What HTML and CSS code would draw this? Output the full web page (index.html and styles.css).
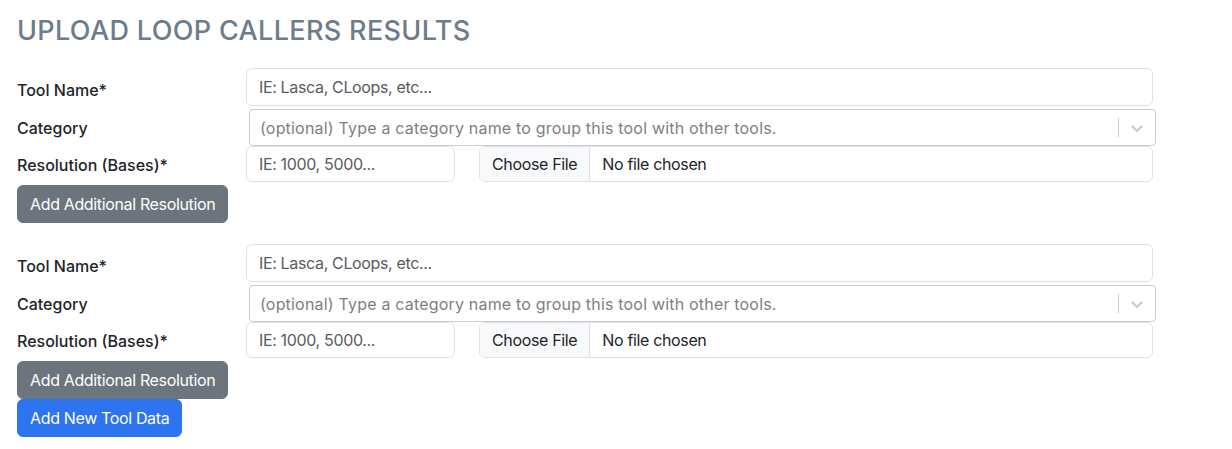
FILE: index.html
```html
<!DOCTYPE html>
<html lang="en">
<head>
<meta charset="utf-8">
<title>Upload Loop Callers Results</title>
<link rel="stylesheet" href="styles.css">
</head>
<body>
<div class="page">
  <h1 class="title">UPLOAD LOOP CALLERS RESULTS</h1>

  <div class="tool-block">
    <div class="row row-name">
      <label class="label">Tool Name*</label>
      <input class="input" type="text" placeholder="IE: Lasca, CLoops, etc...">
    </div>
    <div class="row row-cat">
      <label class="label">Category</label>
      <div class="select">
        <div class="select-value">(optional) Type a category name to group this tool with other tools.</div>
        <div class="select-indicators">
          <span class="select-sep"></span>
          <span class="select-arrow">
            <svg width="20" height="20" viewBox="0 0 20 20"><path fill="#cccccc" d="M4.516 7.548c0.436-0.446 1.043-0.481 1.576 0l3.908 3.747 3.908-3.747c0.533-0.481 1.141-0.446 1.574 0 0.436 0.445 0.408 1.197 0 1.615-0.406 0.418-4.695 4.502-4.695 4.502-0.217 0.223-0.502 0.335-0.787 0.335s-0.57-0.112-0.789-0.335c0 0-4.287-4.084-4.695-4.502s-0.436-1.17 0-1.615z"/></svg>
          </span>
        </div>
      </div>
    </div>
    <div class="row row-res">
      <label class="label">Resolution (Bases)*</label>
      <div class="res-fields">
        <input class="input input-res" type="text" placeholder="IE: 1000, 5000...">
        <div class="file">
          <span class="file-btn">Choose File</span>
          <span class="file-name">No file chosen</span>
        </div>
      </div>
    </div>
    <button class="btn btn-secondary" type="button">Add Additional Resolution</button>
  </div>

  <div class="tool-block tool-block-last">
    <div class="row row-name">
      <label class="label">Tool Name*</label>
      <input class="input" type="text" placeholder="IE: Lasca, CLoops, etc...">
    </div>
    <div class="row row-cat">
      <label class="label">Category</label>
      <div class="select">
        <div class="select-value">(optional) Type a category name to group this tool with other tools.</div>
        <div class="select-indicators">
          <span class="select-sep"></span>
          <span class="select-arrow">
            <svg width="20" height="20" viewBox="0 0 20 20"><path fill="#cccccc" d="M4.516 7.548c0.436-0.446 1.043-0.481 1.576 0l3.908 3.747 3.908-3.747c0.533-0.481 1.141-0.446 1.574 0 0.436 0.445 0.408 1.197 0 1.615-0.406 0.418-4.695 4.502-4.695 4.502-0.217 0.223-0.502 0.335-0.787 0.335s-0.57-0.112-0.789-0.335c0 0-4.287-4.084-4.695-4.502s-0.436-1.17 0-1.615z"/></svg>
          </span>
        </div>
      </div>
    </div>
    <div class="row row-res">
      <label class="label">Resolution (Bases)*</label>
      <div class="res-fields">
        <input class="input input-res" type="text" placeholder="IE: 1000, 5000...">
        <div class="file">
          <span class="file-btn">Choose File</span>
          <span class="file-name">No file chosen</span>
        </div>
      </div>
    </div>
    <button class="btn btn-secondary" type="button">Add Additional Resolution</button>
  </div>

  <button class="btn btn-primary" type="button">Add New Tool Data</button>
</div>
</body>
</html>
```

FILE: styles.css
```css
* { box-sizing: border-box; }

html, body {
  margin: 0;
  padding: 0;
  background: #ffffff;
}

body {
  font-family: Inter, "Noto Sans", sans-serif;
  font-size: 16px;
  line-height: 24px;
  letter-spacing: -0.35px;
  color: #212529;
}

.page {
  padding: 0 17px;
  width: 1180px;
}

.title {
  margin: 0;
  padding-top: 14px;
  height: 68px;
  font-family: Inter, sans-serif;
  font-weight: 500;
  font-size: 27px;
  line-height: 34px;
  letter-spacing: 0.35px;
  color: #6e7b8b;
}

.tool-block {
  display: flex;
  flex-direction: column;
  align-items: flex-start;
  margin-bottom: 21px;
}

.tool-block-last { margin-bottom: 0; }

.row {
  display: grid;
  grid-template-columns: 229px 907px;
  align-items: center;
  width: 100%;
}

.row-name { margin-bottom: 3px; }
.row-res { margin-bottom: 3px; }

.label {
  font-size: 16px;
  color: #212529;
  font-weight: 500;
  letter-spacing: 0;
}

.row-name .label { padding-top: 6px; }
.row-res .label { padding-top: 2px; }

.input {
  display: block;
  width: 100%;
  height: 38px;
  padding: 6px 12px;
  font-family: inherit;
  font-size: 16px;
  line-height: 24px;
  letter-spacing: -0.35px;
  color: #212529;
  background: #fff;
  border: 1px solid #dee2e6;
  border-radius: 6px;
  outline: none;
}

.input::placeholder { color: #595c5f; }

.select {
  margin-left: 3px;
  margin-right: -3px;
  height: 37px;
  display: flex;
  align-items: center;
  border: 1px solid #cccccc;
  border-radius: 4px;
  background: #fff;
}

.select-value {
  flex: 1;
  padding: 2px 8px;
  margin-left: 2px;
  color: #808080;
  letter-spacing: 0.19px;
  white-space: nowrap;
  overflow: hidden;
}

.select-indicators {
  display: flex;
  align-items: center;
  align-self: stretch;
}

.select-sep {
  width: 1px;
  align-self: stretch;
  margin: 8px 0;
  background: #cccccc;
}

.select-arrow {
  display: flex;
  padding: 8px;
}

.res-fields {
  display: grid;
  grid-template-columns: 209px 1fr;
  gap: 24px;
}

.input-res { height: 36px; }

.file {
  display: flex;
  height: 36px;
  border: 1px solid #dee2e6;
  border-radius: 6px;
  overflow: hidden;
  background: #fff;
}

.file-btn {
  display: flex;
  align-items: center;
  padding: 0 12px;
  background: #f8f9fa;
  border-right: 1px solid #dee2e6;
  color: #212529;
}

.file-name {
  display: flex;
  align-items: center;
  padding: 0 12px;
  color: #212529;
}

.btn {
  display: inline-block;
  height: 38px;
  padding: 6px 12px;
  font-family: inherit;
  font-size: 16px;
  line-height: 24px;
  letter-spacing: -0.35px;
  color: #fff;
  border: 1px solid transparent;
  border-radius: 6px;
  cursor: pointer;
}

.btn-secondary { background: #6c757d; border-color: #6c757d; }
.btn-primary { background: #2d74f1; border-color: #2d74f1; }
```
